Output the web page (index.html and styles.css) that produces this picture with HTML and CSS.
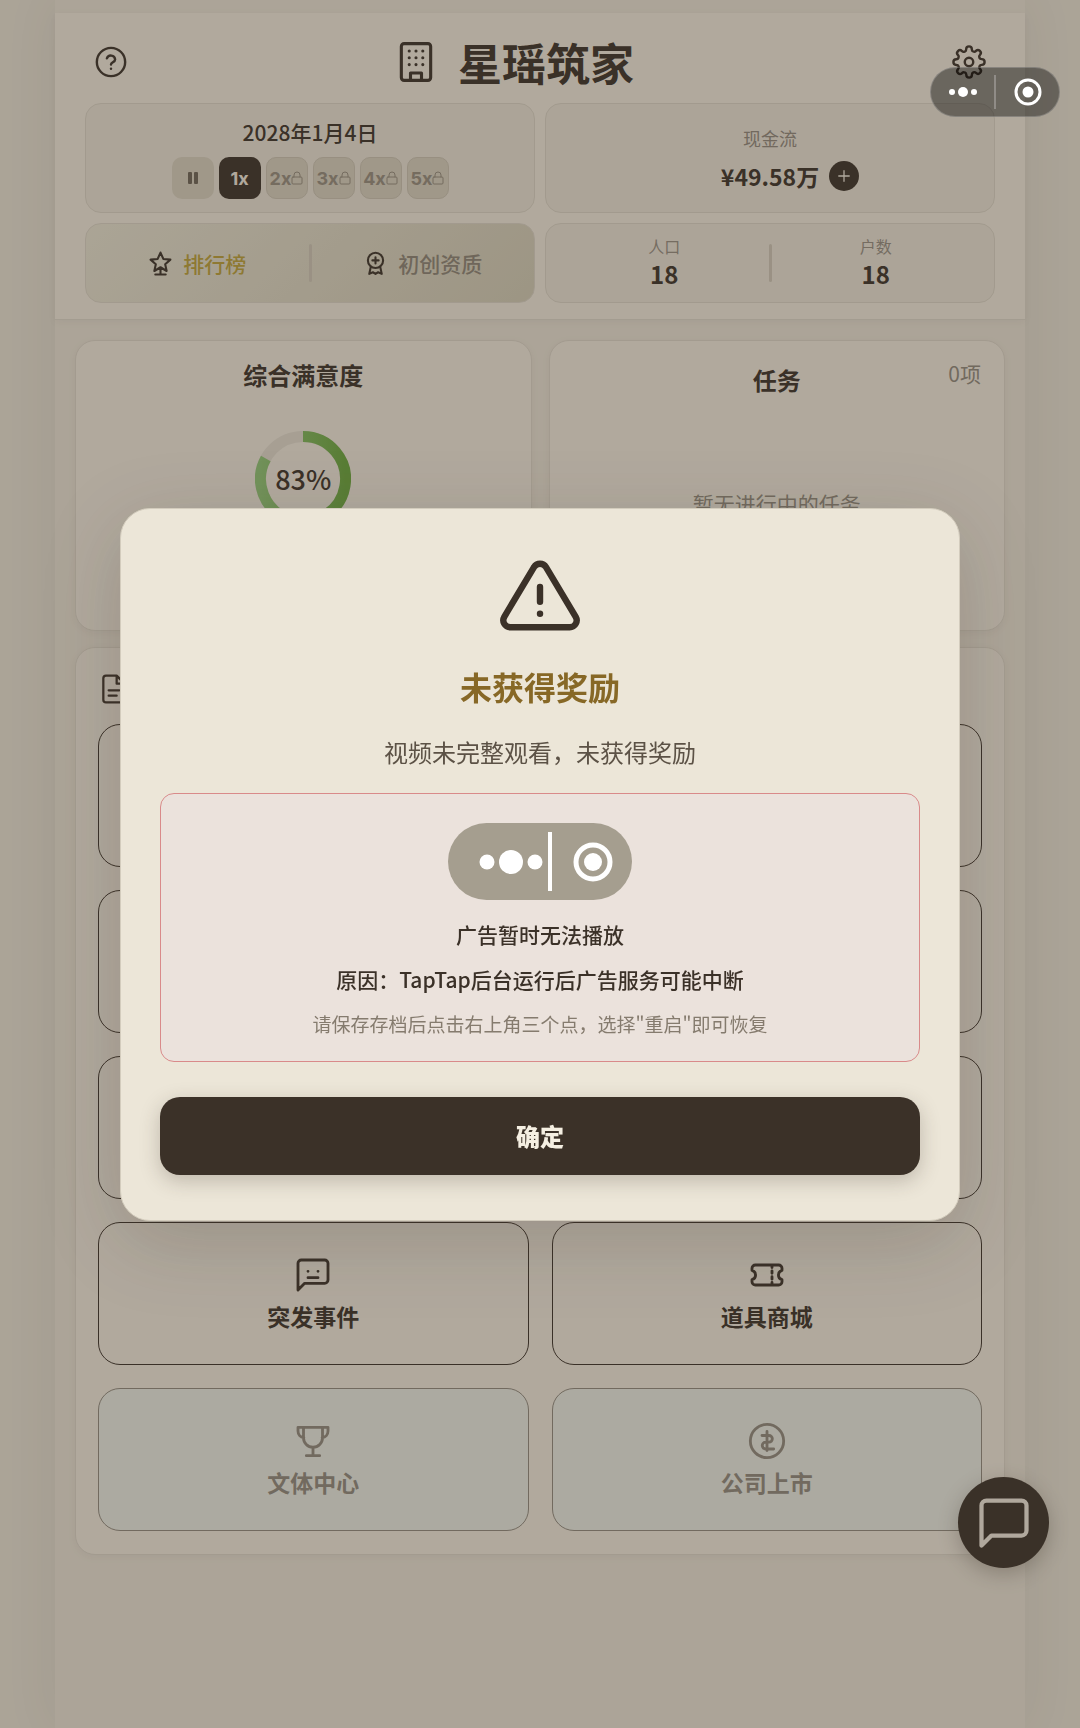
FILE: index.html
```html
<!DOCTYPE html>
<html lang="zh-CN">
<head>
    <meta charset="UTF-8">
    <meta name="viewport" content="width=device-width, initial-scale=1.0">
    <title>星瑶筑家</title>
    <link rel="stylesheet" href="styles.css">
</head>
<body>
    <div class="app">
        <header class="header">
            <div class="title-bar">
                <button type="button" class="icon-btn" aria-label="帮助">
                    <svg class="icon" viewBox="0 0 24 24"><circle cx="12" cy="12" r="10"/><path d="M9.1 9.4a3 3 0 0 1 5.8.8c0 1.9-2.9 2.1-2.9 3.6"/><path d="M12 16.8h.01"/></svg>
                </button>
                <div class="brand">
                    <svg class="icon brand-icon" viewBox="0 0 24 24"><rect x="4" y="2" width="16" height="20" rx="1.5"/><path d="M9 22v-4h6v4M8.3 6h.01M12 6h.01M15.7 6h.01M8.3 9.7h.01M12 9.7h.01M15.7 9.7h.01M8.3 13.4h.01M12 13.4h.01M15.7 13.4h.01"/></svg>
                    <h1>星瑶筑家</h1>
                </div>
                <button type="button" class="icon-btn" aria-label="设置">
                    <svg class="icon" viewBox="0 0 24 24"><circle cx="12" cy="12" r="3"/><path d="M19.4 15a1.65 1.65 0 0 0 .33 1.82l.06.06a2 2 0 0 1-2.83 2.83l-.06-.06a1.65 1.65 0 0 0-1.82-.33 1.65 1.65 0 0 0-1 1.51V21a2 2 0 0 1-4 0v-.09A1.65 1.65 0 0 0 9 19.4a1.65 1.65 0 0 0-1.82.33l-.06.06a2 2 0 0 1-2.83-2.83l.06-.06a1.65 1.65 0 0 0 .33-1.82 1.65 1.65 0 0 0-1.51-1H3a2 2 0 0 1 0-4h.09A1.65 1.65 0 0 0 4.6 9a1.65 1.65 0 0 0-.33-1.82l-.06-.06a2 2 0 0 1 2.83-2.83l.06.06a1.65 1.65 0 0 0 1.82.33H9a1.65 1.65 0 0 0 1-1.51V3a2 2 0 0 1 4 0v.09a1.65 1.65 0 0 0 1 1.51 1.65 1.65 0 0 0 1.82-.33l.06-.06a2 2 0 0 1 2.83 2.83l-.06.06a1.65 1.65 0 0 0-.33 1.82V9a1.65 1.65 0 0 0 1.51 1H21a2 2 0 0 1 0 4h-.09a1.65 1.65 0 0 0-1.51 1z"/></svg>
                </button>
            </div>

            <div class="stats">
                <div class="stat-card stat-tall">
                    <div class="date">2028年1月4日</div>
                    <div class="speeds">
                        <button type="button" class="speed" aria-label="暂停"><svg class="pause" viewBox="0 0 10 12"><rect x="0" y="0" width="4" height="12" rx="1"/><rect x="6" y="0" width="4" height="12" rx="1"/></svg></button>
                        <button type="button" class="speed active">1x</button>
                        <button type="button" class="speed locked">2x<svg class="icon lock" viewBox="0 0 12 14"><rect x="1" y="6" width="10" height="7" rx="1"/><path d="M3 6V4a3 3 0 0 1 6 0v2"/></svg></button>
                        <button type="button" class="speed locked">3x<svg class="icon lock" viewBox="0 0 12 14"><rect x="1" y="6" width="10" height="7" rx="1"/><path d="M3 6V4a3 3 0 0 1 6 0v2"/></svg></button>
                        <button type="button" class="speed locked">4x<svg class="icon lock" viewBox="0 0 12 14"><rect x="1" y="6" width="10" height="7" rx="1"/><path d="M3 6V4a3 3 0 0 1 6 0v2"/></svg></button>
                        <button type="button" class="speed locked">5x<svg class="icon lock" viewBox="0 0 12 14"><rect x="1" y="6" width="10" height="7" rx="1"/><path d="M3 6V4a3 3 0 0 1 6 0v2"/></svg></button>
                    </div>
                </div>

                <div class="stat-card stat-tall">
                    <div class="label">现金流</div>
                    <div class="cash">
                        <span>¥49.58万</span>
                        <button type="button" class="plus" aria-label="增加"><svg class="icon" viewBox="0 0 24 24"><path d="M12 5v14M5 12h14"/></svg></button>
                    </div>
                </div>

                <div class="stat-card stat-split rank-card">
                    <button type="button" class="link-btn gold">
                        <svg class="icon" viewBox="0 0 24 24"><path d="M12 1.5l2.7 6.1 6.8.7-5 4.5 1.4 6.4-5.9-3.6-5.9 3.6 1.4-6.4-5-4.5 6.8-.7zM12 16v6.5M7 22.5h10"/></svg>
                        排行榜
                    </button>
                    <div class="divider"></div>
                    <button type="button" class="link-btn">
                        <svg class="icon" viewBox="0 0 24 24"><circle cx="12" cy="9" r="7.3"/><path d="M12 6v6M9 9h6M7.5 15.2L6 22l3.5-1.6L12 22l2.5-1.6L18 22l-1.5-6.8"/></svg>
                        初创资质
                    </button>
                </div>

                <div class="stat-card stat-split count-card">
                    <div class="count"><span class="count-label">人口</span><strong>18</strong></div>
                    <div class="divider"></div>
                    <div class="count"><span class="count-label">户数</span><strong>18</strong></div>
                </div>
            </div>
        </header>

        <main class="main">
            <div class="panels">
                <section class="panel satisfaction">
                    <h2>综合满意度</h2>
                    <div class="ring">
                        <svg viewBox="0 0 96 96">
                            <defs>
                                <linearGradient id="ringGreen" x1="0" y1="0" x2="1" y2="0">
                                    <stop offset="0" stop-color="#8fc474"/>
                                    <stop offset="1" stop-color="#69a53c"/>
                                </linearGradient>
                            </defs>
                            <circle class="ring-track" cx="48" cy="48" r="42.5"/>
                            <!-- 83% -->
                            <path class="ring-value" stroke="url(#ringGreen)" d="M48 5.5A42.5 42.5 0 1 1 10.8 27.5"/>
                        </svg>
                        <span>83%</span>
                    </div>
                </section>
                <section class="panel tasks">
                    <h2>任务</h2>
                    <span class="task-count">0项</span>
                    <p>暂无进行中的任务</p>
                </section>
            </div>

            <section class="panel features">
                <div class="features-head">
                    <svg class="icon" viewBox="0 0 24 24"><path d="M14 2H6a2 2 0 0 0-2 2v16a2 2 0 0 0 2 2h12a2 2 0 0 0 2-2V8zM14 2v6h6M8 13h8M8 17h6"/></svg>
                </div>
                <div class="tiles">
                    <button type="button" class="tile"></button>
                    <button type="button" class="tile"></button>
                    <button type="button" class="tile"></button>
                    <button type="button" class="tile"></button>
                    <button type="button" class="tile"></button>
                    <button type="button" class="tile"></button>
                    <button type="button" class="tile">
                        <svg class="icon" viewBox="0 0 24 24"><path d="M21 15a2 2 0 0 1-2 2H7l-4 4V5a2 2 0 0 1 2-2h14a2 2 0 0 1 2 2zM9 9.8h.01M15 9.8h.01M9 13.6h6"/></svg>
                        突发事件
                    </button>
                    <button type="button" class="tile">
                        <svg class="icon" viewBox="0 0 24 24"><path d="M15 6v1.5M15 9.5v1.5M15 13v1.5M15 16.5v1.5M5 6h14a2 2 0 0 1 2 2v1.2a2.9 2.9 0 0 0 0 5.6V16a2 2 0 0 1-2 2H5a2 2 0 0 1-2-2v-1.2a2.9 2.9 0 0 0 0-5.6V8a2 2 0 0 1 2-2z"/></svg>
                        道具商城
                    </button>
                    <button type="button" class="tile" disabled>
                        <svg class="icon" viewBox="0 0 24 24"><path d="M3 3.8h18M6.3 3.8V10a5.7 5.7 0 0 0 11.4 0V3.8M12 15.7v5M8 20.8h8M3 3.8V6a4 4 0 0 0 3.5 4M21 3.8V6a4 4 0 0 1-3.5 4"/></svg>
                        文体中心
                    </button>
                    <button type="button" class="tile" disabled>
                        <svg class="icon" viewBox="0 0 24 24"><circle cx="12" cy="12" r="10"/><path d="M12 6.3v11.4M9 8.7h4.2a2 2 0 0 1 0 4h-2a2 2 0 0 0 0 4.1H16"/></svg>
                        公司上市
                    </button>
                </div>
            </section>
        </main>
    </div>

    <button type="button" class="chat-fab" aria-label="聊天">
        <svg class="icon" viewBox="0 0 24 24"><path d="M21 15a2 2 0 0 1-2 2H7l-4 4V5a2 2 0 0 1 2-2h14a2 2 0 0 1 2 2z"/></svg>
    </button>

    <!-- 奖励提示弹窗 -->
    <div class="overlay">
        <div class="modal" role="dialog" aria-labelledby="modal-title">
            <svg class="icon modal-icon" viewBox="0 0 24 24"><path d="M12 9v4M10.363 3.591l-8.106 13.534a1.914 1.914 0 0 0 1.636 2.871h16.214a1.914 1.914 0 0 0 1.636-2.87l-8.106-13.536a1.914 1.914 0 0 0-3.274 0zM12 16.3h.01"/></svg>
            <h2 id="modal-title">未获得奖励</h2>
            <p class="modal-text">视频未完整观看，未获得奖励</p>
            <div class="notice">
                <svg class="pill" viewBox="0 0 184 77">
                    <rect class="pill-bg" width="184" height="77" rx="38.5"/>
                    <circle cx="39" cy="39" r="7.5"/>
                    <circle cx="63" cy="39" r="12"/>
                    <circle cx="87" cy="39" r="7.5"/>
                    <rect x="100" y="9" width="4" height="59"/>
                    <circle class="pill-ring" cx="145" cy="39" r="17"/>
                    <circle cx="145" cy="39" r="9"/>
                </svg>
                <p class="notice-title">广告暂时无法播放</p>
                <p class="notice-reason">原因：TapTap后台运行后广告服务可能中断</p>
                <p class="notice-hint">请保存存档后点击右上角三个点，选择"重启"即可恢复</p>
            </div>
            <button type="button" class="confirm">确定</button>
        </div>
    </div>

    <!-- 小程序胶囊按钮 -->
    <div class="capsule">
        <button type="button" aria-label="更多"><svg viewBox="0 0 28 28"><circle cx="3" cy="14" r="3"/><circle cx="14" cy="14" r="5"/><circle cx="25" cy="14" r="3"/></svg></button>
        <button type="button" aria-label="关闭"><svg viewBox="0 0 28 28"><circle class="capsule-ring" cx="14" cy="14" r="12"/><circle cx="14" cy="14" r="5.5"/></svg></button>
    </div>
</body>
</html>
```
FILE: styles.css
```css
* {
    box-sizing: border-box;
}

body {
    margin: 0;
    padding: 0 55px;
    min-height: 100vh;
    background-color: #e5dfd1;
    color: #3b3128;
    font-family: "Noto Sans CJK SC", sans-serif;
}

h1, h2, p {
    margin: 0;
}

button {
    display: flex;
    align-items: center;
    justify-content: center;
    margin: 0;
    padding: 0;
    border: none;
    background: none;
    color: inherit;
    font-family: inherit;
    cursor: pointer;
}

.icon {
    flex: none;
    fill: none;
    stroke: currentColor;
    stroke-width: 1.7;
    stroke-linecap: round;
    stroke-linejoin: round;
}

.app {
    min-height: 100vh;
    padding-top: 13px;
    background-color: #e7e0d2;
    box-shadow: 0 0 50px rgba(59, 49, 40, 0.08);
}

/* header */
.header {
    padding: 0 30px 16px;
    background-color: #eee7da;
    border-bottom: 1px solid #dad3c5;
    box-shadow: 0 2px 8px rgba(59, 49, 40, 0.05);
}

.title-bar {
    display: flex;
    align-items: center;
    justify-content: space-between;
    height: 90px;
    padding: 8px 8px 0;
}

.icon-btn {
    width: 36px;
    height: 36px;
}

.icon-btn .icon {
    width: 34px;
    height: 34px;
}

.brand {
    display: flex;
    align-items: center;
    gap: 20px;
    padding-right: 52px;
}

.brand-icon {
    width: 44px;
    height: 44px;
}

h1 {
    font-size: 44px;
    line-height: 60px;
    font-weight: 700;
}

.stats {
    display: grid;
    grid-template-columns: 1fr 1fr;
    gap: 10px;
}

.stat-card {
    display: flex;
    align-items: center;
    background-color: #e7e0d2;
    border: 1px solid #d8d1c2;
    border-radius: 16px;
}

.stat-tall {
    flex-direction: column;
    justify-content: center;
    height: 110px;
}

.stat-split {
    height: 80px;
}

.rank-card {
    background: linear-gradient(135deg, #e5e0ce, #d0c9b3);
}

.count-card {
    padding: 0 14px;
}

.date {
    font-size: 21px;
    line-height: 30px;
    font-weight: 500;
}

.speeds {
    display: flex;
    gap: 5px;
    margin-top: 10px;
}

.speed {
    width: 42px;
    height: 42px;
    border-radius: 10px;
    background-color: #d5cdbb;
    color: #938a7b;
    font-family: Inter, sans-serif;
    font-size: 18px;
    font-weight: 700;
}

.speed.active {
    background-color: #3b3128;
    color: #ede6d9;
}

.speed.locked {
    border: 1px solid #c8c0af;
}

.pause {
    width: 10px;
    height: 12px;
    fill: #6d6356;
}

.lock {
    width: 12px;
    height: 14px;
    stroke-width: 1;
}

.label {
    color: #8f867a;
    font-size: 18px;
    line-height: 28px;
}

.cash {
    display: flex;
    align-items: center;
    gap: 10px;
    margin-top: 8px;
    padding-left: 40px;
    font-size: 23px;
    line-height: 32px;
    font-weight: 600;
}

.plus {
    width: 30px;
    height: 30px;
    border-radius: 50%;
    background-color: #3b3128;
    color: #ede6d9;
}

.plus .icon {
    width: 18px;
    height: 18px;
}

.link-btn {
    flex: 1;
    gap: 10px;
    color: #8a8274;
    font-size: 21px;
    line-height: 32px;
    font-weight: 500;
}

.link-btn .icon {
    width: 25px;
    height: 27px;
    stroke: #3b3128;
    stroke-width: 2;
}

.link-btn.gold {
    color: #b99f38;
}

.divider {
    width: 3px;
    height: 38px;
    border-radius: 2px;
    background-color: #cbc3b3;
}

.count {
    flex: 1;
    display: flex;
    flex-direction: column;
    align-items: center;
}

.count-label {
    color: #938b7f;
    font-size: 16px;
    line-height: 22px;
}

.count strong {
    font-size: 24px;
    line-height: 34px;
    font-weight: 600;
}

/* panels */
.main {
    padding: 20px;
}

.panels {
    display: grid;
    grid-template-columns: 1fr 1fr;
    gap: 17px;
}

.panel {
    background-color: #eee7da;
    border: 1px solid #d9d2c4;
    border-radius: 20px;
    box-shadow: 0 2px 8px rgba(59, 49, 40, 0.05);
}

.panel h2 {
    font-size: 24px;
    line-height: 36px;
    font-weight: 600;
    text-align: center;
}

.satisfaction,
.tasks {
    height: 291px;
}

.satisfaction {
    padding-top: 16px;
}

.ring {
    display: grid;
    place-items: center;
    margin-top: 38px;
}

.ring svg,
.ring span {
    grid-area: 1 / 1;
}

.ring svg {
    width: 96px;
    height: 96px;
    fill: none;
    stroke-width: 11;
}

.ring-track {
    stroke: #dfd8ca;
}

.ring span {
    font-size: 27px;
    line-height: 40px;
    font-weight: 500;
}

.tasks {
    position: relative;
    padding-top: 21px;
}

.task-count {
    position: absolute;
    top: 16px;
    right: 23px;
    color: #8f877a;
    font-size: 21px;
    line-height: 32px;
}

.tasks p {
    margin-top: 87px;
    color: #8f877a;
    font-size: 21px;
    line-height: 36px;
    text-align: center;
}

.features {
    margin-top: 16px;
    padding: 25px 22px 23px;
}

.features-head {
    display: flex;
    align-items: center;
    height: 32px;
}

.features-head .icon {
    width: 32px;
    height: 32px;
}

.tiles {
    display: grid;
    grid-template-columns: 1fr 1fr;
    gap: 23px;
    margin-top: 19px;
}

.tile {
    flex-direction: column;
    gap: 5px;
    height: 143px;
    border: 1px solid #3b3128;
    border-radius: 22px;
    font-size: 23px;
    line-height: 32px;
    font-weight: 700;
}

.tile .icon {
    width: 40px;
    height: 40px;
}

.tile:disabled {
    background-color: #e7e8df;
    border-color: #8f887c;
    color: #8f887c;
    cursor: default;
}

.chat-fab {
    position: fixed;
    right: 31px;
    bottom: 160px;
    width: 91px;
    height: 91px;
    border-radius: 50%;
    background-color: #3b3128;
    color: #ede6d9;
    box-shadow: 0 6px 20px rgba(59, 49, 40, 0.3);
}

.chat-fab .icon {
    width: 60px;
    height: 60px;
}

/* modal */
.overlay {
    position: fixed;
    inset: 0;
    display: flex;
    align-items: center;
    justify-content: center;
    padding: 40px;
    background-color: rgba(59, 49, 40, 0.34);
}

.modal {
    display: flex;
    flex-direction: column;
    align-items: center;
    width: 100%;
    max-width: 840px;
    padding: 45px 39px;
    background-color: #ece6d8;
    border: 1px solid #d3ccbd;
    border-radius: 30px;
    box-shadow: 0 20px 80px rgba(59, 49, 40, 0.2);
    text-align: center;
}

.modal-icon {
    width: 88px;
    height: 88px;
    stroke-width: 1.75;
}

.modal h2 {
    margin-top: 20px;
    color: #876826;
    font-size: 32px;
    line-height: 48px;
    font-weight: 700;
}

.modal-text {
    margin-top: 24px;
    color: #5c5246;
    font-size: 24px;
    line-height: 36px;
}

.notice {
    display: flex;
    flex-direction: column;
    align-items: center;
    width: 100%;
    margin-top: 23px;
    padding: 29px 20px 21px;
    background-color: #ebe2dc;
    border: 1px solid #d98a8a;
    border-radius: 14px;
    font-size: 21px;
    line-height: 32px;
    font-weight: 500;
}

.pill {
    width: 184px;
    height: 77px;
    fill: #fff;
}

.pill-bg {
    fill: #a59e8f;
}

.pill-ring {
    fill: none;
    stroke: #fff;
    stroke-width: 5;
}

.notice-title {
    margin-top: 18px;
}

.notice-reason {
    margin-top: 13px;
}

.notice-hint {
    margin-top: 13px;
    color: #857b6e;
    font-size: 19px;
    font-weight: 400;
}

.confirm {
    width: 100%;
    height: 78px;
    margin-top: 35px;
    border-radius: 20px;
    background-color: #3b3128;
    color: #f5efe2;
    box-shadow: 0 6px 20px rgba(59, 49, 40, 0.25);
    font-size: 24px;
    font-weight: 900;
}

/* capsule */
.capsule {
    position: fixed;
    top: 67px;
    right: 20px;
    display: flex;
    width: 130px;
    height: 50px;
    align-items: center;
    border: 1px solid rgba(255, 255, 255, 0.2);
    border-radius: 25px;
    background-color: rgba(0, 0, 0, 0.4);
}

.capsule button {
    flex: 1;
    height: 34px;
}

.capsule button + button {
    border-left: 2px solid rgba(255, 255, 255, 0.25);
}

.capsule svg {
    width: 28px;
    height: 28px;
    fill: #fff;
}

.capsule-ring {
    fill: none;
    stroke: #fff;
    stroke-width: 3;
}
```
